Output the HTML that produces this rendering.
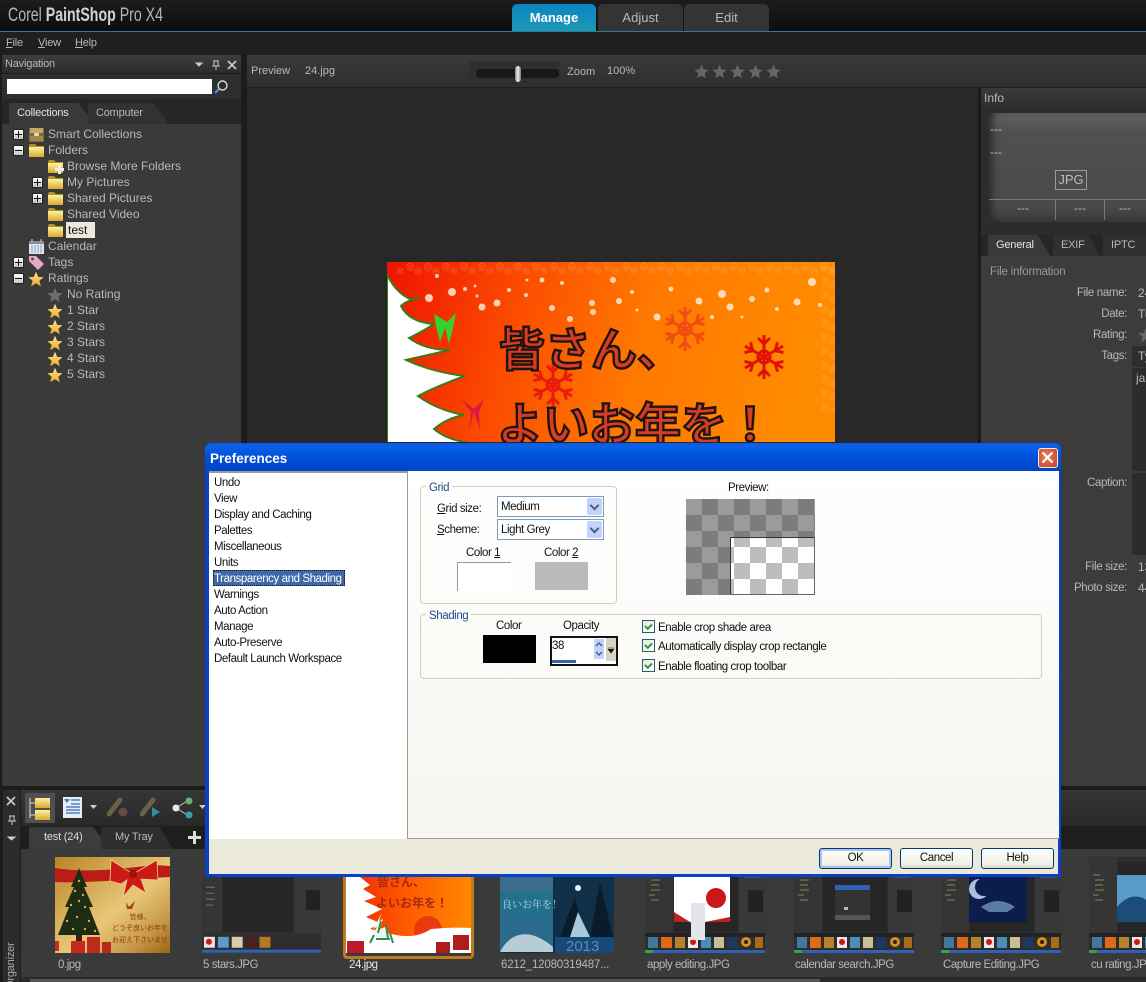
<!DOCTYPE html>
<html><head><meta charset="utf-8"><style>
html,body{margin:0;padding:0;background:#262626}
#r{position:relative;width:1146px;height:982px;overflow:hidden;background:#1c1c1c;font:12px/14px "Liberation Sans","Noto Sans CJK JP",sans-serif;color:#b8b8b8}
.a,.t,svg.a{position:absolute}
.t{white-space:nowrap}
.d{color:#111}
.u{text-decoration:underline}
.x{font-size:11.5px;letter-spacing:-.42px}
.s{font-size:11px;letter-spacing:-.2px}
.l{font-size:11.5px;letter-spacing:-.45px;top:958px}
.f{position:absolute;width:15px;height:13px}
.ex{position:absolute;width:9px;height:9px;background:linear-gradient(#fff,#c4c4c4);border:1px solid #222;box-sizing:content-box}
.ex:before{content:"";position:absolute;left:1px;right:1px;top:4px;height:1px;background:#111}
.ex.p:after{content:"";position:absolute;top:1px;bottom:1px;left:4px;width:1px;background:#111}
.r{text-align:right;width:100px;left:1027px;top:0;font-size:11.5px;letter-spacing:-.35px}
.cb{position:absolute;left:642px;width:11px;height:11px;border:1px solid #2b5a6f;background:linear-gradient(135deg,#e8e8e0,#fff)}
.cb:after{content:"";position:absolute;left:2px;top:1px;width:5px;height:3px;border-left:2px solid #2a9a3a;border-bottom:2px solid #2a9a3a;transform:rotate(-45deg) translate(-1px,1px)}
.btn{position:absolute;top:848px;width:71px;height:19px;border:1px solid #003c74;border-radius:3px;background:linear-gradient(#fff,#f0efe6 80%,#d8d4c4);color:#111;text-align:center;line-height:19px}
.cbo{position:absolute;left:497px;width:105px;height:19px;border:1px solid #7f9db9;background:#fff;color:#111;line-height:21px;text-indent:3px}
.cbo i{position:absolute;right:1px;top:1px;width:15px;height:17px;background:#c1d3fb;border-radius:2px}
.cbo i:after{content:"";position:absolute;left:4px;top:4px;width:5px;height:5px;border-right:2px solid #4d6185;border-bottom:2px solid #4d6185;transform:rotate(45deg)}
</style></head><body><div id="r">
<svg width="0" height="0" style="position:absolute"><defs>
<symbol id="star" viewBox="0 0 16 16"><path d="M8 .8 10.2 5.9 15.6 6.3 11.4 9.8 12.8 15.2 8 12.3 3.2 15.2 4.6 9.8.4 6.3 5.800 5.900Z"/></symbol>
<symbol id="fo" viewBox="0 0 15 13"><path d="M0 2Q0 0 2 0H6L8 2H15V13H0Z" fill="#b58f28"/><rect y="3" width="15" height="10" fill="url(#fg)"/></symbol>
<linearGradient id="fg" x1="0" y1="0" x2="0" y2="1"><stop offset="0" stop-color="#fff2a0"/><stop offset="1" stop-color="#d9a92e"/></linearGradient>
<linearGradient id="sg" x1="0" y1="0" x2="0" y2="1"><stop offset="0" stop-color="#ffe48a"/><stop offset="1" stop-color="#f0a830"/></linearGradient>
<linearGradient id="mg" x1="0" y1="0" x2="1" y2=".1"><stop offset="0" stop-color="#f01200"/><stop offset=".3" stop-color="#fb4a00"/><stop offset=".6" stop-color="#ff7800"/><stop offset="1" stop-color="#ff8c00"/></linearGradient>
<linearGradient id="gold" x1="0" y1="0" x2="1" y2="1"><stop offset="0" stop-color="#b88428"/><stop offset=".55" stop-color="#e8c878"/><stop offset=".8" stop-color="#c89a48"/><stop offset="1" stop-color="#9c6414"/></linearGradient>
<pattern id="lace" width="18" height="14" patternUnits="userSpaceOnUse"><g fill="none" stroke="#ffc8a0" stroke-width=".8"><circle cx="5" cy="5" r="3.500"/><circle cx="5" cy="5" r="1.500"/><circle cx="13" cy="9" r="3"/><circle cx="13" cy="9" r="1"/></g></pattern>
<g id="flake" stroke-width="3" fill="none"><g id="arm"><path d="M0 0V-22M0-13-6-19M0-13 6-19"/></g><use href="#arm" transform="rotate(60)"/><use href="#arm" transform="rotate(120)"/><use href="#arm" transform="rotate(180)"/><use href="#arm" transform="rotate(240)"/><use href="#arm" transform="rotate(300)"/><circle r="6"/></g>
<symbol id="shot" viewBox="0 0 120 96">
<rect width="120" height="96" fill="#2e2e2e"/><rect width="28" height="76" fill="#353535"/><rect x="29" y="5" width="64" height="70" fill="#262626"/><rect x="94" width="26" height="76" fill="#383838"/>
<path d="M4 18h7M6 23h9M6 28h8M6 33h9M4 38h6M6 43h8" stroke="#8f8550" stroke-width="1"/><path d="M100 12h16M100 20h16" stroke="#666" stroke-width="1"/><rect x="103" y="33" width="15" height="22" fill="#222"/>
<rect y="76" width="120" height="4" fill="#222"/>
<g><rect x="3" y="80" width="10" height="11" fill="#3f7a9c"/><rect x="16" y="80" width="11" height="11" fill="#dc6a1a"/><rect x="30" y="80" width="10" height="11" fill="#b8822c"/><rect x="43" y="80" width="10" height="11" fill="#f0e4e4"/><circle cx="48" cy="85" r="3" fill="#c81818"/><rect x="56" y="80" width="10" height="11" fill="#4c8cb8"/><rect x="69" y="80" width="10" height="11" fill="#c8bf98"/><rect x="82" y="80" width="10" height="11" fill="#1c3860"/><circle cx="101" cy="85" r="5" fill="#d89018"/><circle cx="101" cy="85" r="2" fill="#222"/><rect x="110" y="80" width="8" height="11" fill="#a86c18"/></g>
<rect y="93" width="120" height="3" fill="#2f62b4"/><rect y="93" width="8" height="3" fill="#3aa050"/></symbol>
</defs></svg>

<!-- top bar -->
<div class="a" style="left:0;top:0;width:1146px;height:31px;background:linear-gradient(#1c1c1c,#0d0d0d)"></div>
<div class="a" style="left:0;top:31px;width:1146px;height:1px;background:#2a7d9e"></div>
<div class="t" style="left:8px;top:4px;font-size:19px;line-height:23px;color:#b4b4b4;transform:scaleX(.745);transform-origin:0 0">Corel <b style="color:#d2d2d2">PaintShop</b> Pro X4</div>
<div class="a" style="left:512px;top:4px;width:84px;height:27px;border-radius:5px 5px 0 0;background:linear-gradient(#0b84c4,#1d97b2);color:#fff;font-weight:bold;font-size:13px;line-height:27px;text-align:center">Manage</div>
<div class="a" style="left:598px;top:4px;width:85px;height:27px;border-radius:5px 5px 0 0;background:#343434;line-height:27px;text-align:center;font-size:13px">Adjust</div>
<div class="a" style="left:684px;top:4px;width:85px;height:27px;border-radius:5px 5px 0 0;background:#343434;line-height:27px;text-align:center;font-size:13px">Edit</div>
<div class="a" style="left:0;top:32px;width:1146px;height:23px;background:#1f1f1f"></div>
<div class="t s" style="left:6px;top:36px"><span class="u">F</span>ile</div>
<div class="t s" style="left:38px;top:36px"><span class="u">V</span>iew</div>
<div class="t s" style="left:75px;top:36px"><span class="u">H</span>elp</div>

<!-- left panel -->
<div class="a" style="left:2px;top:55px;width:239px;height:18px;background:linear-gradient(#3e3e3e,#2c2c2c)"></div>
<div class="t s" style="left:5px;top:57px">Navigation</div>
<svg class="a" style="left:195px;top:60px" width="45" height="11" fill="none" stroke="#ccc"><path d="M1 3H7L4 6Z" fill="#ccc"/><path d="M18 1H24M19 1V6H23V1M17 6H25M21 6V10"/><path d="M33 1 41 9M41 1 33 9" stroke-width="1.600"/></svg>
<div class="a" style="left:2px;top:74px;width:239px;height:25px;background:#2e2e2e"></div>
<div class="a" style="left:7px;top:79px;width:205px;height:15px;background:#fff"></div>
<svg class="a" style="left:213px;top:79px" width="16" height="16" fill="none"><circle cx="9.500" cy="6.500" r="4.500" stroke="#d8d8d8" stroke-width="1.400"/><path d="M6 10 2 14" stroke="#4f86d8" stroke-width="2.400"/></svg>
<div class="a" style="left:2px;top:99px;width:239px;height:25px;background:#262626"></div>
<svg class="a" style="left:7px;top:102px" width="160" height="22"><path d="M2 22V3Q2 1 4 1H71L88 22Z" fill="#3a3a3a"/><path d="M81 22V3Q81 1 83 1H146L162 22Z" fill="#323232"/></svg>
<div class="t s" style="left:17px;top:106px;color:#e4e4e4">Collections</div>
<div class="t s" style="left:96px;top:106px">Computer</div>
<div class="a" style="left:2px;top:124px;width:239px;height:662px;background:#3a3a3a"></div>

<!-- tree -->
<div class="ex p" style="left:13px;top:129px"></div>
<svg class="a" style="left:29px;top:127px" width="15" height="15"><rect y="1" width="15" height="14" fill="#7a6a3c"/><rect x="1" y="1" width="13" height="5" fill="#c0a868"/><rect x="5" y="6" width="5" height="4" fill="#e8d8a0"/><rect x="1" y="9" width="13" height="5" fill="#a08a50"/></svg>
<div class="t" style="left:48px;top:127px">Smart Collections</div>
<div class="ex" style="left:13px;top:145px"></div><svg class="f" style="left:29px;top:144px"><use href="#fo"/></svg>
<div class="t" style="left:48px;top:143px">Folders</div>
<svg class="f" style="left:48px;top:160px"><use href="#fo"/></svg><svg class="a" style="left:55px;top:165px" width="9" height="9"><path d="M3 0h3v3h3v3H6v3H3V6H0V3h3Z" fill="#eee"/></svg>
<div class="t" style="left:67px;top:159px">Browse More Folders</div>
<div class="ex p" style="left:32px;top:177px"></div><svg class="f" style="left:48px;top:176px"><use href="#fo"/></svg>
<div class="t" style="left:67px;top:175px">My Pictures</div>
<div class="ex p" style="left:32px;top:193px"></div><svg class="f" style="left:48px;top:192px"><use href="#fo"/></svg>
<div class="t" style="left:67px;top:191px">Shared Pictures</div>
<svg class="f" style="left:48px;top:208px"><use href="#fo"/></svg>
<div class="t" style="left:67px;top:207px">Shared Video</div>
<svg class="f" style="left:48px;top:224px"><use href="#fo"/></svg>
<div class="a" style="left:66px;top:222px;width:29px;height:16px;background:#ebe9dc"></div>
<div class="t d" style="left:68px;top:223px">test</div>
<svg class="a" style="left:29px;top:239px" width="15" height="15"><rect y="2" width="15" height="13" fill="#dfe6f0"/><rect y="2" width="15" height="3" fill="#8a8a92"/><path d="M2 7h11M2 9h11M2 11h11M2 13h11" stroke="#8aa0c8" stroke-dasharray="2 1"/><path d="M3 0v3M12 0v3" stroke="#ddd"/></svg>
<div class="t" style="left:48px;top:239px">Calendar</div>
<div class="ex p" style="left:13px;top:257px"></div>
<svg class="a" style="left:29px;top:255px" width="16" height="16"><path d="M0 1H7L15 9 9 15 0 6Z" fill="#e8a8c8"/><circle cx="3.500" cy="4" r="1.400" fill="#444"/></svg>
<div class="t" style="left:48px;top:255px">Tags</div>
<div class="ex" style="left:13px;top:273px"></div>
<svg class="a" style="left:28px;top:271px" width="16" height="16" fill="url(#sg)"><use href="#star"/></svg>
<div class="t" style="left:48px;top:271px">Ratings</div>
<svg class="a" style="left:47px;top:287px" width="16" height="16" fill="#6c6c72"><use href="#star"/></svg>
<div class="t" style="left:67px;top:287px">No Rating</div>
<svg class="a" style="left:47px;top:303px" width="16" height="16" fill="url(#sg)"><use href="#star"/></svg>
<div class="t" style="left:67px;top:303px">1 Star</div>
<svg class="a" style="left:47px;top:319px" width="16" height="16" fill="url(#sg)"><use href="#star"/></svg>
<div class="t" style="left:67px;top:319px">2 Stars</div>
<svg class="a" style="left:47px;top:335px" width="16" height="16" fill="url(#sg)"><use href="#star"/></svg>
<div class="t" style="left:67px;top:335px">3 Stars</div>
<svg class="a" style="left:47px;top:351px" width="16" height="16" fill="url(#sg)"><use href="#star"/></svg>
<div class="t" style="left:67px;top:351px">4 Stars</div>
<svg class="a" style="left:47px;top:367px" width="16" height="16" fill="url(#sg)"><use href="#star"/></svg>
<div class="t" style="left:67px;top:367px">5 Stars</div>

<!-- center -->
<div class="a" style="left:247px;top:55px;width:899px;height:32px;background:linear-gradient(#3a3a3a,#2e2e2e)"></div>
<div class="a" style="left:247px;top:88px;width:734px;height:698px;background:#282828"></div>
<div class="t" style="left:251px;top:64px;font-size:11px">Preview</div>
<div class="t" style="left:305px;top:64px;font-size:11px">24.jpg</div>
<div class="a" style="left:469px;top:61px;width:91px;height:22px;background:#2f2f2f"></div>
<div class="a" style="left:476px;top:69px;width:83px;height:9px;border-radius:4px;background:#181818"></div>
<div class="a" style="left:515px;top:66px;width:6px;height:16px;border-radius:3px;background:linear-gradient(90deg,#888,#eee,#777)"></div>
<div class="t" style="left:567px;top:65px;font-size:11px">Zoom</div>
<div class="t" style="left:607px;top:64px;font-size:11px">100%</div>
<svg class="a" style="left:694px;top:64px" width="88" height="16" fill="#66666c"><use href="#star" width="15" height="15"/><use href="#star" x="18" width="15" height="15"/><use href="#star" x="36" width="15" height="15"/><use href="#star" x="54" width="15" height="15"/><use href="#star" x="72" width="15" height="15"/></svg>

<!-- main image -->
<svg class="a" style="left:387px;top:262px" width="448" height="180" viewBox="0 0 448 180">
<rect width="448" height="180" fill="url(#mg)"/>
<rect x="10" width="438" height="14" fill="url(#lace)" opacity=".3"/>
<rect x="434" width="14" height="150" fill="url(#lace)" opacity=".3"/>
<path d="M0 12Q8 30 23 37L33 36Q20 38 14 44Q22 60 47 62Q35 70 22 76Q38 88 63 88L19 98Q45 110 78 114Q50 124 31 134Q50 148 77 153Q60 156 47 167Q60 178 83 181H0Z" fill="#fff" stroke="#3d7a1c" stroke-width="2"/>
<g fill="#ffe9d4" opacity=".85"><circle cx="42" cy="36" r="4"/><circle cx="65" cy="30" r="4"/><circle cx="78" cy="27" r="2"/><circle cx="88" cy="24" r="1.500"/><circle cx="95" cy="45" r="3.500"/><circle cx="110" cy="41" r="3.500"/><circle cx="139" cy="33" r="2"/><circle cx="155" cy="18" r="2.500"/><circle cx="165" cy="46" r="3"/><circle cx="175" cy="21" r="2"/><circle cx="183" cy="57" r="3"/><circle cx="205" cy="41" r="3"/><circle cx="206" cy="50" r="3"/><circle cx="226" cy="18" r="3"/><circle cx="232" cy="39" r="3"/><circle cx="245" cy="30" r="2"/><circle cx="270" cy="55" r="3.500"/><circle cx="284" cy="27" r="2.500"/><circle cx="300" cy="64" r="3"/><circle cx="312" cy="39" r="3.500"/><circle cx="335" cy="32" r="4"/><circle cx="343" cy="45" r="3.500"/><circle cx="365" cy="37" r="3"/><circle cx="380" cy="28" r="2.500"/><circle cx="390" cy="47" r="2"/><circle cx="410" cy="40" r="3.500"/><circle cx="425" cy="20" r="4"/><circle cx="433" cy="43" r="2"/><circle cx="50" cy="14" r="2"/><circle cx="90" cy="34" r="1.500"/><circle cx="122" cy="28" r="2"/><circle cx="140" cy="18" r="1.500"/><circle cx="250" cy="48" r="1.500"/><circle cx="325" cy="55" r="2"/><circle cx="355" cy="55" r="1.500"/></g>
<use href="#flake" transform="translate(298 67)" stroke="#f24c10"/>
<use href="#flake" transform="translate(377 95)" stroke="#e01208"/>
<use href="#flake" transform="translate(166 123)" stroke="#e81c08"/>
<path d="M47 52 60 60 69 51 66 66 62 82 58 66 53 80 49 64Z" fill="#36d030"/>
<path d="M74 137 87 147 97 137 92 150 93 168 87 150 82 168 84 150Z" fill="#d81c3c"/>
<g font-family="'Noto Sans CJK JP',sans-serif" font-weight="700" font-size="46" fill="#d83c22" stroke="#1e1412" stroke-width="2.400"><text x="112" y="104">皆さん、</text><text x="110" y="179">よいお年を！</text></g>
</svg>

<!-- right panel -->
<div class="a" style="left:978px;top:88px;width:3px;height:698px;background:#1a1a1a"></div>
<div class="a" style="left:981px;top:88px;width:165px;height:19px;background:linear-gradient(#3a3a3a,#2e2e2e)"></div>
<div class="t" style="left:984px;top:91px">Info</div>
<div class="a" style="left:981px;top:107px;width:165px;height:128px;background:#2c2c2c"></div>
<div class="a" style="left:988px;top:113px;width:158px;height:109px;border-radius:6px 0 0 6px;background:linear-gradient(#606060,#505050 18%,#4a4a4a 85%,#3a3a3a);box-shadow:inset 8px 0 8px -4px #2a2a2a"></div>
<div class="t" style="left:990px;top:122px">---</div><div class="t" style="left:990px;top:145px">---</div>
<div class="a" style="left:1055px;top:170px;width:30px;height:18px;border:1px solid #999;color:#bbb;text-align:center;line-height:18px;font-size:13px">JPG</div>
<div class="a" style="left:989px;top:199px;width:157px;height:1px;background:#7a7a7a"></div>
<div class="a" style="left:1055px;top:199px;width:1px;height:21px;background:#7a7a7a"></div>
<div class="a" style="left:1104px;top:199px;width:1px;height:21px;background:#7a7a7a"></div>
<div class="t" style="left:1017px;top:201px">---</div><div class="t" style="left:1074px;top:201px">---</div><div class="t" style="left:1119px;top:201px">---</div>
<div class="a" style="left:981px;top:235px;width:165px;height:21px;background:#262626"></div>
<svg class="a" style="left:988px;top:234px" width="158" height="22"><path d="M0 22V3Q0 1 2 1H50L62 22Z" fill="#3a3a3a"/><path d="M65 22V3Q65 1 67 1H100L112 22Z" fill="#303030"/><path d="M115 22V3Q115 1 117 1H158V22Z" fill="#303030"/></svg>
<div class="t s" style="left:996px;top:238px;color:#e4e4e4">General</div>
<div class="t s" style="left:1061px;top:238px">EXIF</div>
<div class="t s" style="left:1111px;top:238px">IPTC</div>
<div class="a" style="left:981px;top:256px;width:165px;height:530px;background:#3c3c3c"></div>
<div class="t" style="left:990px;top:265px;color:#999;font-size:11.5px;letter-spacing:-.2px">File information</div>
<div class="t r" style="top:286px">File name:</div><div class="t" style="left:1138px;top:286px">24</div>
<div class="t r" style="top:307px">Date:</div><div class="t" style="left:1138px;top:307px">Tu</div>
<div class="t r" style="top:328px">Rating:</div><svg class="a" style="left:1138px;top:327px" width="16" height="16" fill="#66666c"><use href="#star"/></svg>
<div class="t r" style="top:349px">Tags:</div>
<div class="a" style="left:1132px;top:346px;width:14px;height:21px;background:#2e2e2e;border-radius:3px 0 0 3px"></div><div class="t" style="left:1138px;top:349px">Ty</div>
<div class="a" style="left:1132px;top:368px;width:14px;height:103px;background:#2c2c2c;border-radius:3px 0 0 3px"></div><div class="t" style="left:1136px;top:371px">ja</div>
<div class="t r" style="top:476px">Caption:</div>
<div class="a" style="left:1132px;top:473px;width:14px;height:82px;background:#2c2c2c;border-radius:3px 0 0 3px"></div>
<div class="t r" style="top:560px">File size:</div><div class="t" style="left:1138px;top:560px">13</div>
<div class="t r" style="top:581px">Photo size:</div><div class="t" style="left:1138px;top:581px">44</div>

<!-- organizer -->
<div class="a" style="left:0;top:786px;width:1146px;height:196px;background:#1c1c1c"></div>
<div class="a" style="left:3px;top:790px;width:17px;height:192px;background:#2c2c2c"></div>
<svg class="a" style="left:6px;top:796px" width="12" height="50" fill="none" stroke="#ccc"><path d="M1 1 9 9M9 1 1 9" stroke-width="1.600"/><path d="M3 20H9M4 20V25H8V20M2 25H10M6 25V29"/><path d="M2 41H9L5.500 44Z" fill="#ccc"/></svg>
<div class="t s" style="left:4px;top:975px;color:#aaa;transform:rotate(-90deg);transform-origin:7px 7px">Organizer</div>
<div class="a" style="left:21px;top:790px;width:1125px;height:38px;background:linear-gradient(#363636,#282828)"></div>
<div class="a" style="left:25px;top:793px;width:30px;height:30px;background:#4f4f4f"></div>
<svg class="a" style="left:29px;top:797px" width="22" height="24"><path d="M1 1V21M1 6H6M1 18H6" stroke="#ddd" fill="none"/><rect x="6" y="1" width="15" height="10" fill="url(#fg)"/><rect x="6" y="13" width="15" height="10" fill="url(#fg)"/></svg>
<svg class="a" style="left:63px;top:797px" width="20" height="22"><rect width="19" height="21" fill="#e4eef8"/><path d="M1 2H7L4 6Z" fill="#5a7a9a"/><path d="M8 3H17M8 7H17M3 10H17M3 13H17M3 16H17" stroke="#5a7fc0" stroke-width="1.600"/></svg>
<svg class="a" style="left:90px;top:805px" width="8" height="5"><path d="M0 0H7L3.500 4Z" fill="#ccc"/></svg>
<svg class="a" style="left:107px;top:797px" width="22" height="22"><path d="M2 17 13 3" stroke="#6b6148" stroke-width="5" stroke-linecap="round"/><circle cx="16" cy="15" r="4.500" fill="#6a4a44"/></svg>
<svg class="a" style="left:140px;top:797px" width="22" height="22"><path d="M2 17 13 3" stroke="#6b6148" stroke-width="5" stroke-linecap="round"/><path d="M12 10 20 15 12 20Z" fill="#2e8fa0"/></svg>
<svg class="a" style="left:171px;top:797px" width="22" height="22"><path d="M5 11 18 3M5 11 18 19" stroke="#ccc"/><circle cx="5" cy="11" r="3.500" fill="#dfeee8"/><circle cx="18" cy="4" r="3.500" fill="#6ab07a"/><circle cx="18" cy="18" r="3.500" fill="#3a9ab0"/></svg>
<svg class="a" style="left:199px;top:805px" width="8" height="5"><path d="M0 0H7L3.500 4Z" fill="#ccc"/></svg>
<div class="a" style="left:21px;top:826px;width:1125px;height:23px;background:#1e1e1e"></div>
<svg class="a" style="left:29px;top:826px" width="145" height="23"><path d="M0 23V3Q0 1 2 1H64L81 23Z" fill="#3c3c3c"/><path d="M72 23V3Q72 1 74 1H130L144 23Z" fill="#2e2e2e"/></svg>
<div class="t s" style="left:44px;top:830px;color:#ddd">test (24)</div>
<div class="t s" style="left:115px;top:830px">My Tray</div>
<svg class="a" style="left:188px;top:831px" width="13" height="13"><path d="M5 0H8V5H13V8H8V13H5V8H0V5H5Z" fill="#ddd"/></svg>
<div class="a" style="left:21px;top:849px;width:1125px;height:128px;background:#3a3a3a"></div>
<div class="a" style="left:22px;top:857px;width:1px;height:95px;background:#4a2c34"></div>
<div class="a" style="left:21px;top:977px;width:1125px;height:5px;background:#2a2a2a"></div>
<div class="a" style="left:30px;top:979px;width:790px;height:3px;background:#555"></div>

<!-- thumbs -->
<svg class="a" style="left:55px;top:857px" width="115" height="96" viewBox="0 0 115 96">
<rect width="115" height="96" fill="url(#gold)"/>
<path d="M0 11C20 14 40 14 62 12L100 8 115 9V20L78 22C50 24 25 26 0 25Z" fill="#bc1c16"/>
<path d="M78 17 56 3 55 24 66 27 72 23 68 40 78 28 91 36 86 22 103 23 102 3Z" fill="#cc1a14" stroke="#eccf90" stroke-width=".8"/>
<circle cx="78" cy="17" r="4" fill="#9c1010"/>
<path d="M24 11 32 30 29 30 38 50 34 50 45 78H3L14 50 10 50 19 30 16 30Z" fill="#1e2c14"/>
<rect x="21" y="78" width="6" height="6" fill="#3a2010"/>
<g fill="#d8b040"><circle cx="24" cy="24" r="1.200"/><circle cx="20" cy="34" r="1.200"/><circle cx="28" cy="38" r="1.200"/><circle cx="16" cy="48" r="1.200"/><circle cx="30" cy="50" r="1.200"/><circle cx="24" cy="44" r="1.200"/><circle cx="12" cy="64" r="1.200"/><circle cx="22" cy="60" r="1.200"/><circle cx="34" cy="64" r="1.200"/><circle cx="18" cy="72" r="1.200"/><circle cx="30" cy="72" r="1.200"/><circle cx="40" cy="74" r="1.200"/></g>
<rect x="16" y="84" width="14" height="12" fill="#c8281c"/><rect x="32" y="80" width="13" height="16" fill="#c02a1c"/><rect x="47" y="85" width="9" height="11" fill="#b8281c"/><rect y="84" width="4" height="10" fill="#c03020"/>
<path d="M71 45 74 50 80 44 77 52H72Z" fill="#a83c18"/>
<g font-family="'Noto Sans CJK JP',sans-serif" font-size="7" fill="#8a3a1a" text-anchor="middle"><text x="85" y="62">皆様、</text><text x="85" y="73">どうぞ良いお年を</text><text x="85" y="85">お迎え下さいませ</text></g>
</svg>
<svg class="a" style="left:202px;top:877px" width="119" height="76" viewBox="0 20 120 76">
<rect y="20" width="120" height="76" fill="#2e2e2e"/><rect y="20" width="20" height="56" fill="#353535"/><rect x="21" y="20" width="71" height="55" fill="#262626"/><rect x="93" y="20" width="27" height="56" fill="#383838"/><rect x="105" y="33" width="14" height="20" fill="#222"/>
<path d="M4 30h9M4 36h8M4 42h9M4 48h7" stroke="#777" stroke-width="1"/>
<rect x="2" y="80" width="11" height="11" fill="#f0e0e0"/><circle cx="7" cy="85" r="3" fill="#c81818"/><rect x="16" y="80" width="11" height="11" fill="#5a9cc8"/><rect x="30" y="80" width="11" height="11" fill="#d8cfa8"/><rect x="44" y="80" width="11" height="11" fill="#4a2020"/><rect x="58" y="80" width="11" height="11" fill="#b87820"/>
<rect y="93" width="120" height="3" fill="#2f62b4"/></svg>
<div class="a" style="left:343px;top:870px;width:125px;height:83px;border:3px solid #c07a1e;border-radius:0 0 4px 4px"></div>
<svg class="a" style="left:346px;top:877px" width="125" height="76" viewBox="0 0 125 76">
<defs><linearGradient id="g24" x1="0" y1="0" x2="1" y2="0"><stop offset="0" stop-color="#f02800"/><stop offset=".5" stop-color="#ff5c00"/><stop offset="1" stop-color="#ff8800"/></linearGradient></defs>
<rect width="125" height="76" fill="url(#g24)"/>
<circle cx="82" cy="53" r="14" fill="#e83a10"/>
<path d="M0 0H14L24 8 17 12 30 20 18 24 36 32 20 40 34 46 24 52 50 58Q70 62 85 52Q105 50 125 51V76H0Z" fill="#fff"/>
<path d="M36 36 33 44 37 42 34 52 39 50 44 60H25L31 50 27 52Z" fill="#eef6ee"/>
<path d="M35 44 32 56M40 48 42 62M30 62H44M28 58 24 66M44 56 47 66" stroke="#2e9050" stroke-width="2"/>
<rect x="1" y="64" width="17" height="12" fill="#c01828"/><rect x="90" y="65" width="14" height="11" fill="#b01c1c"/><rect x="107" y="58" width="16" height="15" fill="#b01c1c"/>
<g font-family="'Noto Sans CJK JP',sans-serif" font-weight="700" fill="#a82810"><text x="31" y="9" font-size="12">皆さん、</text><text x="30" y="30" font-size="12">よいお年を！</text></g>
</svg>
<svg class="a" style="left:500px;top:877px" width="114" height="76" viewBox="0 0 114 76">
<rect width="114" height="76" fill="#0c2c48"/><rect width="53" height="15" fill="#3c6c8c"/><rect y="15" width="53" height="23" fill="#23708c"/><rect y="38" width="53" height="37" fill="#2a6a8c"/>
<path d="M0 75C10 55 30 50 53 70V75Z" fill="#b8ccd8"/>
<rect x="55" width="59" height="60" fill="#10304a"/><circle cx="78" cy="11" r="3" fill="#e8f4ff"/><path d="M60 60 75 20 85 60ZM90 60 100 5 113 60Z" fill="#0a1c2c"/><path d="M70 60 78 35 90 60Z" fill="#a8c8dc"/>
<rect x="55" y="60" width="59" height="16" fill="#184a78"/>
<text x="2" y="31" font-family="'Noto Serif CJK SC',serif" font-size="10" fill="#b8d8e8">良いお年を！</text>
<text x="66" y="74" font-size="15" fill="#5c8cb8" font-family="Liberation Sans,sans-serif">2013</text>
</svg>
<svg class="a" style="left:645px;top:857px" width="120" height="96"><use href="#shot"/><rect x="29" y="20" width="56" height="45" fill="#fff"/><circle cx="71" cy="41" r="10" fill="#c81818"/><path d="M29 65V55L45 65ZM60 65 85 60V65Z" fill="#c02020"/><rect x="46" y="46" width="14" height="37" fill="#e4e4ea"/></svg>
<svg class="a" style="left:794px;top:857px" width="120" height="96"><use href="#shot"/><rect x="41" y="28" width="35" height="35" fill="#333"/><rect x="41" y="28" width="35" height="5" fill="#2f62b4"/><rect x="50" y="50" width="4" height="3" fill="#c8b890"/><rect x="41" y="58" width="35" height="5" fill="#555"/></svg>
<svg class="a" style="left:941px;top:857px" width="120" height="96"><use href="#shot"/><rect x="28" y="20" width="58" height="45" fill="#0c1c4c"/><circle cx="38" cy="32" r="10" fill="#a8c0d8"/><circle cx="43" cy="30" r="9" fill="#0c1c4c"/><path d="M40 50Q57 38 74 50L66 55H48Z" fill="#5c7ca8"/></svg>
<svg class="a" style="left:1089px;top:857px" width="120" height="96"><use href="#shot"/><rect x="28" y="18" width="36" height="47" fill="#5a9ac8"/><path d="M28 50Q45 30 64 48V65H28Z" fill="#1c4c78"/></svg>

<div class="t l" style="left:58px">0.jpg</div>
<div class="t l" style="left:203px">5 stars.JPG</div>
<div class="t l" style="left:349px;color:#e8e8e8">24.jpg</div>
<div class="t l" style="left:501px;letter-spacing:-.2px">6212_12080319487...</div>
<div class="t l" style="left:647px">apply editing.JPG</div>
<div class="t l" style="left:795px">calendar search.JPG</div>
<div class="t l" style="left:943px">Capture Editing.JPG</div>
<div class="t l" style="left:1091px">cu rating.JPG</div>

<!-- dialog -->
<div class="a" style="left:205px;top:443px;width:856px;height:434px;background:#0a3fc8;border-radius:6px 6px 0 0"></div>
<div class="a" style="left:205px;top:443px;width:856px;height:28px;border-radius:6px 6px 0 0;background:linear-gradient(#0a5ae0 0,#0a62ea 12%,#0050d8 50%,#0046c8 100%)"></div>
<div class="t" style="left:210px;top:452px;color:#fff;font-weight:bold;font-size:13.500px">Preferences</div>
<div class="a" style="left:1038px;top:448px;width:18px;height:18px;border:1px solid #f0e8e8;border-radius:3px;background:radial-gradient(circle at 40% 40%,#e8805c,#c8401c)"></div>
<svg class="a" style="left:1041px;top:451px" width="14" height="14"><path d="M1.500 1.500 11.500 11.500M11.500 1.500 1.500 11.500" stroke="#fff" stroke-width="2.200"/></svg>
<div class="a" style="left:209px;top:471px;width:849px;height:403px;background:#ebe9dc"></div>
<div class="a" style="left:209px;top:471px;width:198px;height:368px;background:#fff;border-top:2px solid #9a9a9a;box-sizing:border-box"></div>
<div class="a" style="left:407px;top:471px;width:651px;height:367px;background:linear-gradient(#fff,#f6f5ef);border-left:1px solid #9a9a98;border-bottom:1px solid #9a9a98;box-sizing:content-box"></div>
<div class="a" style="left:213px;top:570px;width:132px;height:16px;background:#3d69a8;outline:1px dotted #111;outline-offset:-1px"></div>
<div class="t d x" style="left:214px;top:476px">Undo</div>
<div class="t d x" style="left:214px;top:492px">View</div>
<div class="t d x" style="left:214px;top:508px">Display and Caching</div>
<div class="t d x" style="left:214px;top:524px">Palettes</div>
<div class="t d x" style="left:214px;top:540px">Miscellaneous</div>
<div class="t d x" style="left:214px;top:556px">Units</div>
<div class="t x" style="left:214px;top:572px;color:#fff">Transparency and Shading</div>
<div class="t d x" style="left:214px;top:588px">Warnings</div>
<div class="t d x" style="left:214px;top:604px">Auto Action</div>
<div class="t d x" style="left:214px;top:620px">Manage</div>
<div class="t d x" style="left:214px;top:636px">Auto-Preserve</div>
<div class="t d x" style="left:214px;top:652px">Default Launch Workspace</div>

<div class="a" style="left:420px;top:486px;width:195px;height:116px;border:1px solid #d0d0bf;border-radius:4px"></div>
<div class="t x" style="left:426px;top:481px;padding:0 3px;background:#fefefd;color:#1c4c90">Grid</div>
<div class="t d x" style="left:437px;top:502px"><span class="u">G</span>rid size:</div>
<div class="cbo x" style="top:496px">Medium<i></i></div>
<div class="t d x" style="left:437px;top:523px"><span class="u">S</span>cheme:</div>
<div class="cbo x" style="top:519px">Light Grey<i></i></div>
<div class="t d x" style="left:466px;top:546px">Color <span class="u">1</span></div>
<div class="t d x" style="left:544px;top:546px">Color <span class="u">2</span></div>
<div class="a" style="left:457px;top:562px;width:53px;height:28px;background:#fff;border-left:1px solid #999;border-top:1px solid #999"></div>
<div class="a" style="left:535px;top:562px;width:53px;height:28px;background:#b9b9b9"></div>
<div class="t d x" style="left:728px;top:481px">Preview:</div>

<svg class="a" style="left:686px;top:499px" width="129" height="96" shape-rendering="crispEdges">
<defs><pattern id="ck" width="32" height="32" patternUnits="userSpaceOnUse"><rect width="32" height="32" fill="#9b9b9b"/><rect x="16" width="16" height="16" fill="#7c7c7c"/><rect y="16" width="16" height="16" fill="#7c7c7c"/></pattern>
<pattern id="ck2" width="32" height="32" patternUnits="userSpaceOnUse"><rect width="32" height="32" fill="#fff"/><rect x="16" width="16" height="16" fill="#bdbdbd"/><rect y="16" width="16" height="16" fill="#bdbdbd"/></pattern></defs>
<rect width="129" height="96" fill="url(#ck)"/>
<rect x="44" y="38" width="85" height="58" fill="url(#ck2)"/>
<path d="M44.500 96V38.500H129" fill="none" stroke="#333"/>
<path d="M129 95.500H44" stroke="#666" fill="none"/><rect x="128" y="38" width="1" height="58" fill="#666"/></svg>

<div class="a" style="left:420px;top:614px;width:620px;height:63px;border:1px solid #d0d0bf;border-radius:4px"></div>
<div class="t x" style="left:426px;top:609px;padding:0 3px;background:#fbfbf8;color:#1c4c90">Shading</div>
<div class="t d x" style="left:496px;top:619px">Color</div>
<div class="t d x" style="left:563px;top:619px">Opacity</div>
<div class="a" style="left:483px;top:635px;width:53px;height:28px;background:#000"></div>
<div class="a" style="left:550px;top:636px;width:64px;height:26px;border:2px solid #111;background:#fff"></div>
<div class="t d x" style="left:552px;top:639px">38</div>
<div class="a" style="left:552px;top:660px;width:24px;height:3px;background:#38669e"></div>
<div class="a" style="left:594px;top:639px;width:10px;height:20px;background:#c1d3fb"></div>
<svg class="a" style="left:594px;top:640px" width="10" height="18" fill="none" stroke="#4d6185" stroke-width="1.500"><path d="M2 6 5 3 8 6M2 12 5 15 8 12"/></svg>
<div class="a" style="left:606px;top:638px;width:10px;height:23px;background:#d8d4c4"></div>
<svg class="a" style="left:607px;top:647px" width="8" height="8"><path d="M1 0H7M1 2H7L4 6Z" fill="#111" stroke="#111" stroke-width=".6"/></svg>

<div class="cb" style="top:620px"></div><div class="t d x" style="left:658px;top:621px">Enable crop shade area</div>
<div class="cb" style="top:639px"></div><div class="t d x" style="left:658px;top:640px">Automatically display crop rectangle</div>
<div class="cb" style="top:659px"></div><div class="t d x" style="left:658px;top:660px">Enable floating crop toolbar</div>

<div class="btn x" style="left:819px;box-shadow:inset 0 0 0 2px #a8c4ec">OK</div>
<div class="btn x" style="left:900px">Cancel</div>
<div class="btn x" style="left:981px">Help</div>
</div></body></html>
